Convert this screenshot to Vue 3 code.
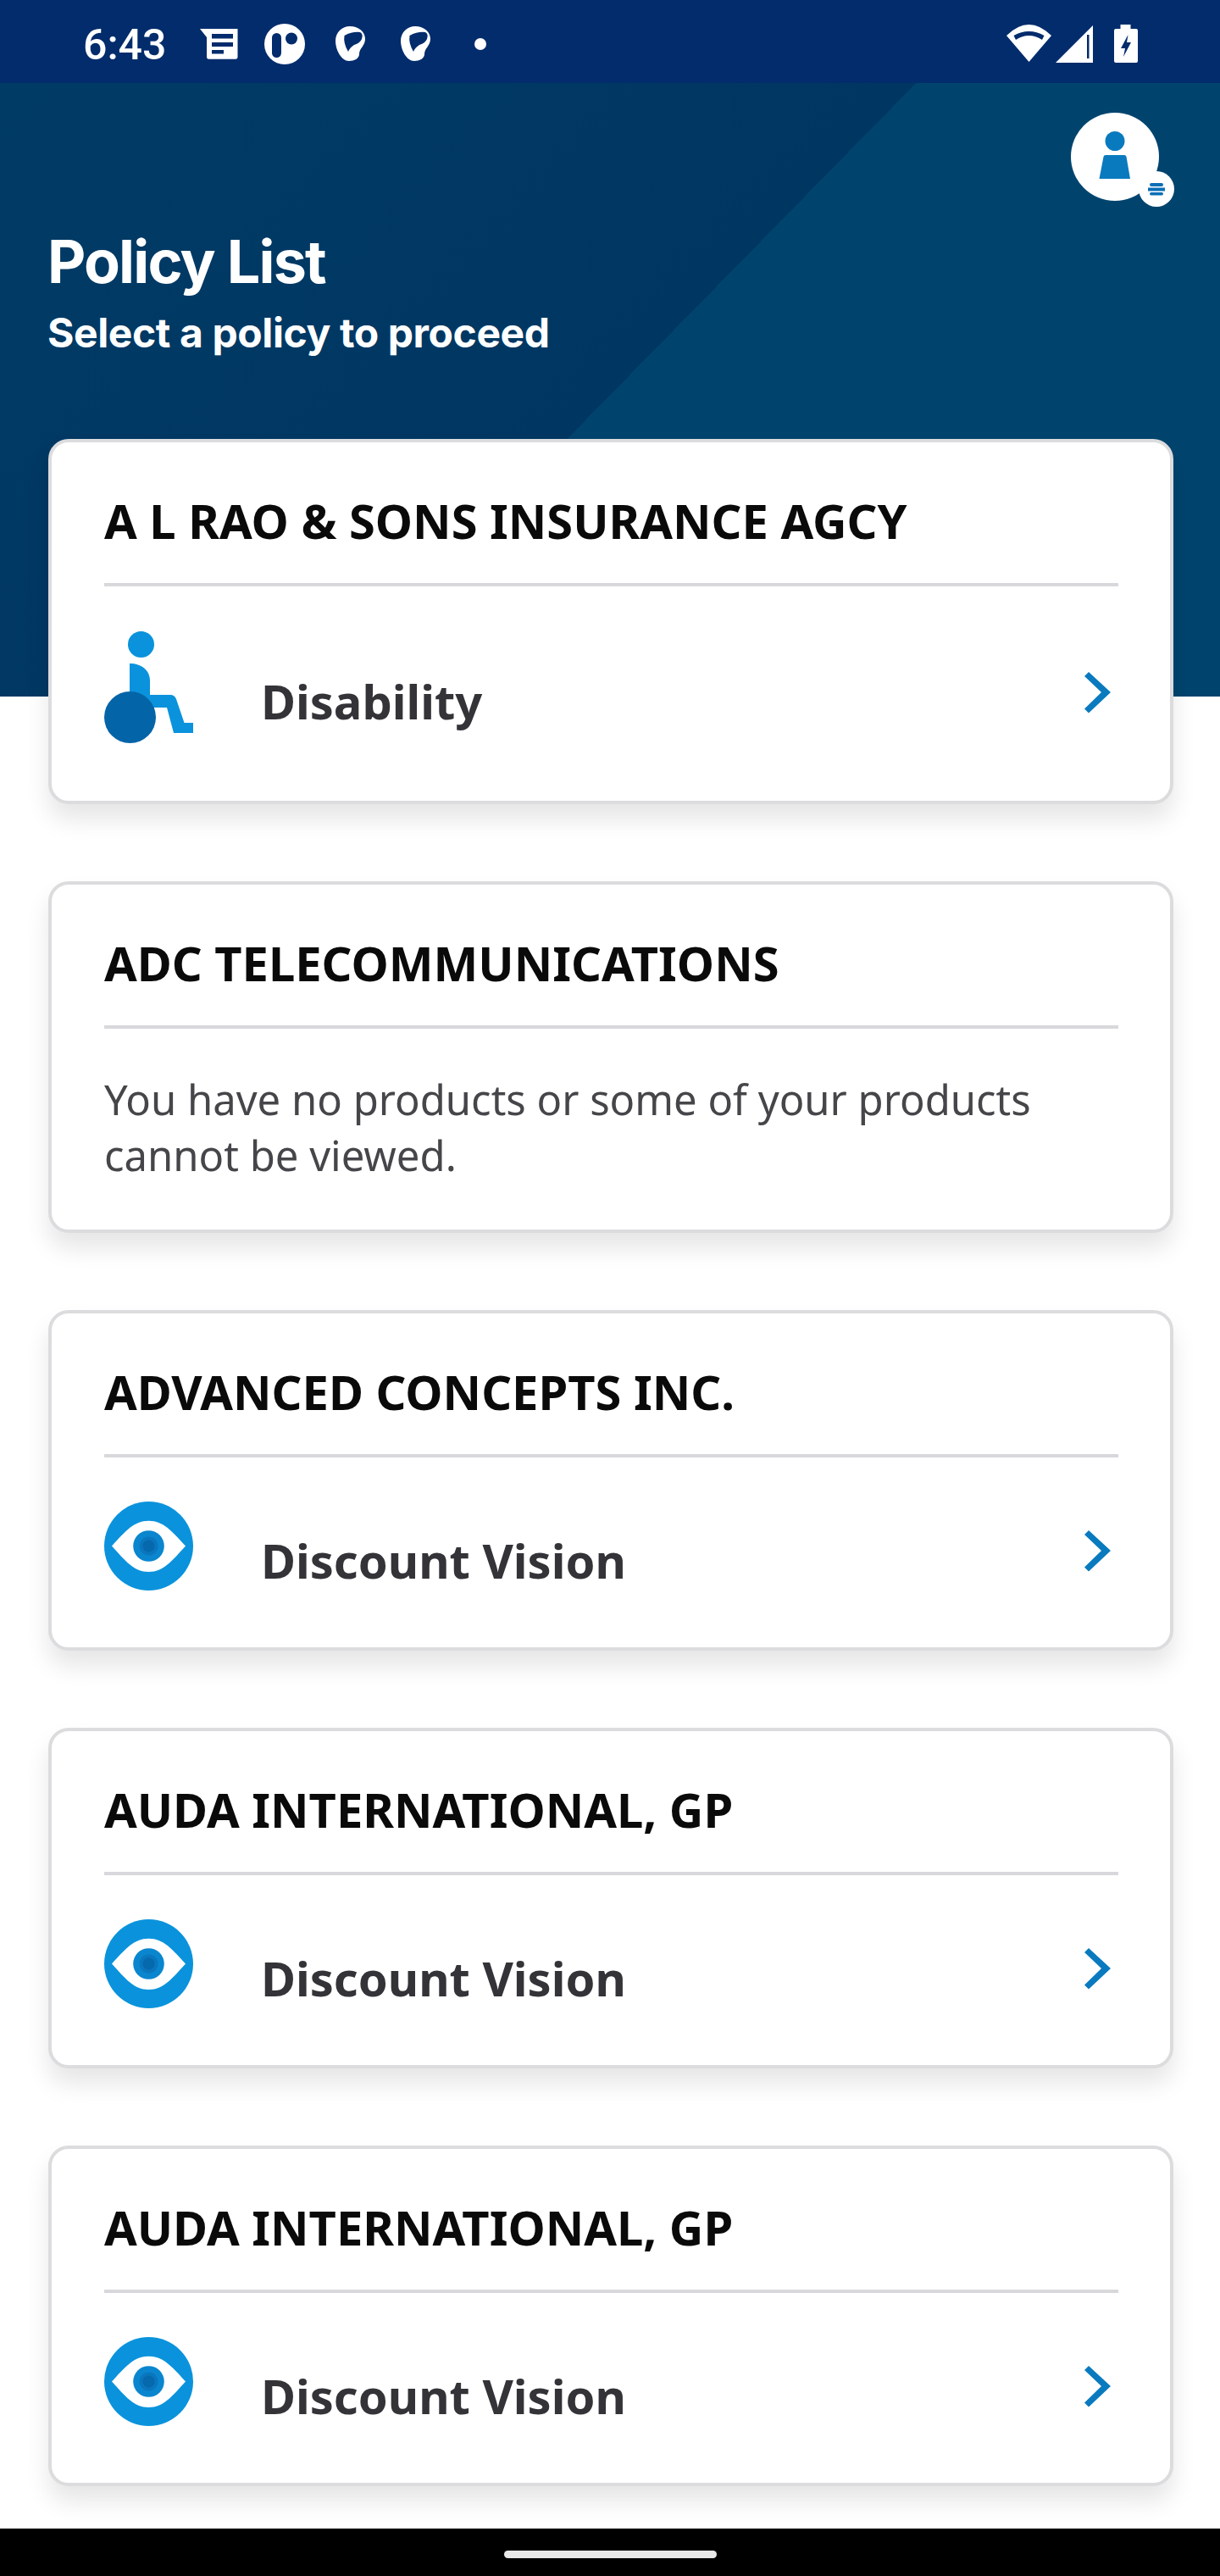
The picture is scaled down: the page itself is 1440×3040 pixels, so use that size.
<template>
  <div class="page">
    <div class="status-bar">
      <span class="time">6:43</span>
      <svg class="ic-doc" width="45" height="36" viewBox="0 0 45 36">
        <path fill="#fff" d="M0 0H44.5V33Q44.5 35.7 42 35.7H10.5Q8 35.7 8 33V10Z" />
        <path fill="#022c6c" d="M14 6H39V11.5H14ZM14 16H39V21H14ZM14 25H28V29.5H14Z" />
      </svg>
      <svg class="ic-circle" width="48" height="48" viewBox="0 0 48 48">
        <circle cx="24" cy="24" r="24" fill="#fff" />
        <rect x="9" y="11" width="11" height="29" rx="5.5" fill="#022c6c" />
        <circle cx="32" cy="17.5" r="7" fill="#022c6c" />
      </svg>
      <svg v-for="n in 2" :key="n" class="ic-blob" width="35" height="41" viewBox="0 0 35 41">
        <path fill="#fff" d="M17 0C28 0 35 7 35 15C35 23 28 26 28 33C28 38 22 41 16 41C7 41 0 28 0 17C0 7 8 0 17 0Z" />
        <path fill="#022c6c" d="M10.5 11Q20 6 29 7Q33 9 31 15Q29 20 22 22Q17 25 15 30Q9 20 10.5 11Z" />
      </svg>
      <span class="dot"></span>

      <div class="status-right">
        <svg width="53" height="44" viewBox="0 0 53 44">
          <path fill="#fff" d="M0 13Q26.5 -13 53 13L26.5 44Z" />
          <path fill="#022c6c" d="M8.5 13Q26.5 3 44.5 13L42 18Q26.5 8 11 18Z" />
        </svg>
        <svg class="ic-signal" width="44" height="44" viewBox="0 0 44 44">
          <path fill="#fff" d="M44 0V44H0Z" />
          <path fill="#022c6c" d="M37 11H39.5V39H37Z" />
        </svg>
        <svg class="ic-battery" width="28" height="45" viewBox="0 0 28 45">
          <path fill="#fff" d="M7.5 0H19.5V5H26Q28 5 28 7V43Q28 45 26 45H2Q0 45 0 43V7Q0 5 2 5H7.5Z" />
          <path fill="#022c6c" d="M16.5 12L8 28H13L11 38L20 21H15Z" />
        </svg>
      </div>
    </div>

    <header class="hero">
      <div class="hero-top">
        <div class="avatar">
          <svg width="104" height="104" viewBox="0 0 104 104">
            <circle cx="52" cy="52" r="52" fill="#fff" />
            <ellipse cx="52" cy="33.5" rx="11.5" ry="11.5" fill="#0a7abf" />
            <path fill="#0a7abf" d="M41 50H63Q65 50 65.500 52L70 78H33.500L38.500 52Q39 50 41 50Z" />
          </svg>
          <svg class="badge" width="42" height="42" viewBox="0 0 42 42">
            <circle cx="21" cy="21" r="21" fill="#fff" />
            <rect x="13" y="14" width="16" height="4" rx="2" fill="#0a6fb5" />
            <rect x="11" y="19.500" width="20" height="4" fill="#0a6fb5" />
            <rect x="13" y="25" width="16" height="3.500" rx="1.700" fill="#0a6fb5" />
          </svg>
        </div>
      </div>
      <h1 class="title">Policy List</h1>
      <p class="subtitle">Select a policy to proceed</p>
    </header>

    <main class="cards">
      <section v-for="(policy, i) in policies" :key="i" class="card">
        <h2 class="card-title">{{ policy.name }}</h2>
        <div v-if="policy.product" class="row">
          <svg v-if="policy.icon === 'disability'" class="row-icon tall" width="105" height="132" viewBox="0 0 105 132">
            <circle cx="43.500" cy="15.500" r="15.500" fill="#0a93dc" />
            <path fill="#0a93dc" d="M30 38C44 38 54 46 54 58V75H78Q83 75 85 80L94.500 108H105V120H82L74 90H30Z" />
            <circle cx="30.500" cy="101.500" r="30.500" fill="#0464a8" />
          </svg>
          <svg v-else class="row-icon" width="105" height="105" viewBox="0 0 105 105">
            <circle cx="52.500" cy="52.500" r="52.500" fill="#0a93dc" />
            <path fill="#fff" d="M9 52.500C25 35 35 22.700 52.500 22.700C70 22.700 80 35 96 52.500C80 70 70 83 52.500 83C35 83 25 70 9 52.500Z" />
            <circle cx="52.500" cy="52.500" r="18.300" fill="#0a86cf" />
            <circle cx="52.500" cy="52.500" r="11" fill="#0a76bd" />
            <circle cx="52.500" cy="52.500" r="7" fill="#0668ad" />
          </svg>
          <span class="product">{{ policy.product }}</span>
          <svg class="chevron" width="31" height="49" viewBox="0 0 31 49">
            <path fill="#0a7abf" d="M5 0L31 24L5 48.500L0 43.500L20 24L0 5Z" />
          </svg>
        </div>
        <p v-else class="empty">You have no products or some of your products cannot be viewed.</p>
      </section>
    </main>

    <div class="nav-bar"><span class="home-pill"></span></div>
  </div>
</template>

<script setup>
const policies = [
  { name: 'A L RAO & SONS INSURANCE AGCY', product: 'Disability', icon: 'disability' },
  { name: 'ADC TELECOMMUNICATIONS' },
  { name: 'ADVANCED CONCEPTS INC.', product: 'Discount Vision', icon: 'vision' },
  { name: 'AUDA INTERNATIONAL, GP', product: 'Discount Vision', icon: 'vision' },
  { name: 'AUDA INTERNATIONAL, GP', product: 'Discount Vision', icon: 'vision' },
];
</script>

<style>
html, body {
  margin: 0;
  background: #fff;
}
</style>

<style scoped>
.page {
  width: 1440px;
  height: 3040px;
  display: flex;
  flex-direction: column;
  overflow: hidden;
  background: #fff;
  font-family: "Noto Sans", "Open Sans", sans-serif;
}

.status-bar {
  height: 98px;
  flex: none;
  display: flex;
  align-items: center;
  padding: 0 97px 0 98px;
  box-sizing: border-box;
  background: #022c6c;
  color: #fff;
}

.time {
  width: 96px;
  font-family: Roboto, sans-serif;
  font-size: 50px;
  font-weight: 500;
  line-height: 1;
  margin-top: 8px;
  white-space: nowrap;
}

.ic-doc { margin: 5px 0 0 42px; }
.ic-circle { margin: 5px 0 0 31px; }
.ic-blob { margin: 5px 6px 0 36px; }
.ic-blob + .dot { margin-left: 46px; }

.dot {
  width: 14px;
  height: 14px;
  margin-top: 5px;
  border-radius: 50%;
  background: #fff;
}

.status-right {
  margin-left: auto;
  display: flex;
  align-items: flex-start;
  padding-top: 4px;
}

.ic-signal { margin-left: 5px; margin-top: 1px; }
.ic-battery { margin-left: 25px; }

.hero {
  height: 724px;
  flex: none;
  box-sizing: border-box;
  padding: 35px 72px 0 56px;
  color: #fff;
  background: linear-gradient(134.45deg, #003b66 0, #003762 772px, #00446e 772px, #00446e 100%);
}

.hero-top {
  display: flex;
  justify-content: flex-end;
}

.avatar {
  position: relative;
  width: 104px;
  height: 104px;
}

.avatar svg { display: block; }

.badge {
  position: absolute;
  right: -18px;
  bottom: -7px;
}

.title {
  margin: 30px 0 0;
  font-family: Inter, sans-serif;
  font-size: 70px;
  line-height: 84px;
  font-weight: 700;
  letter-spacing: -1.8px;
}

.subtitle {
  margin: 12px 0 0;
  font-family: Inter, sans-serif;
  font-size: 48px;
  line-height: 60px;
  font-weight: 700;
  letter-spacing: -0.4px;
}

.cards {
  flex: 1;
  display: flex;
  flex-direction: column;
  gap: 91px;
  margin-top: -304px;
  padding: 0 55px 0 57px;
}

.card {
  box-sizing: border-box;
  border: 4px solid #dcdcde;
  border-radius: 24px;
  background: #fff;
  padding: 0 61px 0 62px;
  box-shadow: 0 18px 28px rgba(0, 0, 0, 0.1);
}

.card-title {
  margin: 0;
  height: 170px;
  box-sizing: border-box;
  padding: 56px 0 37px;
  border-bottom: 4px solid #d8d8dc;
  font-size: 56px;
  line-height: 73px;
  font-weight: 700;
  color: #0a0a0a;
  white-space: nowrap;
}

.row {
  display: flex;
  align-items: center;
  padding: 52px 0 67px;
}

.row-icon {
  flex: none;
  display: block;
}

.row-icon.tall {
  margin: 1px 0;
}

.product {
  flex: 1;
  margin-left: 80px;
  padding-top: 32px;
  font-size: 56px;
  line-height: 70px;
  font-weight: 700;
  color: #333338;
}

.chevron {
  flex: none;
  margin: 12px 9px 0 0;
}

.empty {
  margin: 0;
  padding: 50px 0 55px;
  font-size: 49px;
  line-height: 66px;
  color: #46464a;
}

.nav-bar {
  height: 56px;
  flex: none;
  display: flex;
  justify-content: center;
  padding-top: 26px;
  box-sizing: border-box;
  background: #000;
  position: relative;
}

.home-pill {
  width: 251px;
  height: 9px;
  border-radius: 5px;
  background: #e8e8e8;
}
</style>
